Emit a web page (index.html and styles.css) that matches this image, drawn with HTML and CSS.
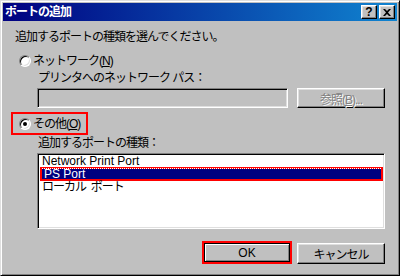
FILE: index.html
```html
<!DOCTYPE html>
<html lang="ja">
<head>
  <meta charset="UTF-8">
  <title>ポートの追加</title>
  <link rel="stylesheet" href="styles.css">
</head>
<body>
<div class="window">
  <div class="title-bar">
    <span class="title-text">ポートの追加</span>
    <div class="title-buttons">
      <span class="title-btn help">?</span>
      <span class="title-btn close">
        <svg width="8" height="7" viewBox="0 0 8 7"><path d="M0 0h2l2 2 2-2h2L5 3.5 8 7H6L4 5 2 7H0l3-3.5z" fill="#000"/></svg>
      </span>
    </div>
  </div>
  <div class="content">
    <div class="prompt ja">追加するポートの種類を選んでください。</div>

    <div class="radio-row network">
      <span class="radio"></span>
      <span class="ja">ネットワーク(<u>N</u>)</span>
    </div>
    <div class="sub-label ja">プリンタへのネットワーク パス：</div>
    <div class="path-row">
      <div class="textbox"></div>
      <button class="btn disabled ja">参照(<u>B</u>)...</button>
    </div>

    <div class="radio-row other">
      <span class="radio checked"></span>
      <span class="ja">その他(<u>O</u>)</span>
    </div>
    <div class="sub-label ja">追加するポートの種類：</div>
    <div class="listbox">
      <div class="list-item first">Network Print Port</div>
      <div class="list-item selected"><span class="focus">PS Port</span></div>
      <div class="list-item ja">ローカル&nbsp; ポート</div>
    </div>

    <div class="actions">
      <div class="default-wrap">
        <button class="btn default">OK</button>
      </div>
      <button class="btn cancel ja">キャンセル</button>
    </div>
  </div>
</div>
</body>
</html>
```

FILE: styles.css
```css
body {
  margin: 0;
  font-family: "Liberation Sans", "Noto Sans CJK JP", sans-serif;
  font-size: 12px;
  color: #000;
}

.ja {
  letter-spacing: -1px;
}

.window {
  width: 400px;
  height: 276px;
  box-sizing: border-box;
  background-color: #c0c0c0;
  border: 1px solid;
  border-color: #dfdfdf #000 #000 #dfdfdf;
  box-shadow: inset 1px 1px #fff, inset -1px -1px #808080;
  padding: 2px;
  overflow: hidden;
}

.title-bar {
  height: 18px;
  display: flex;
  align-items: center;
  justify-content: space-between;
  background: linear-gradient(to right, #000080, #1084d0);
  padding: 0 2px 0 2px;
}

.title-text {
  color: #fff;
  font-weight: bold;
  letter-spacing: -1px;
  line-height: 14px;
}

.title-buttons {
  display: flex;
  gap: 2px;
}

.title-btn {
  width: 14px;
  height: 12px;
  display: flex;
  align-items: center;
  justify-content: center;
  background-color: #c0c0c0;
  border: 1px solid;
  border-color: #fff #000 #000 #fff;
  box-shadow: inset -1px -1px #808080, inset 1px 1px #dfdfdf;
  font-weight: bold;
  font-size: 12px;
  line-height: 12px;
}

.content {
  padding: 0 12px 0 11px;
}

.prompt {
  margin: 10px 0 0 1px;
  line-height: 13px;
}

.radio-row {
  display: flex;
  align-items: center;
  gap: 2px;
  line-height: 12px;
}

.radio-row.network {
  margin-top: 11px;
  padding-left: 5px;
}

.radio-row.other {
  width: 67px;
  height: 19px;
  margin: 4px 0 0 -3px;
  padding-left: 6px;
  border: 2px solid #f00;
}

.radio {
  width: 12px;
  height: 12px;
  box-sizing: border-box;
  border-radius: 50%;
  background-color: #fff;
  border: 1px solid;
  border-color: #808080 #fff #fff #808080;
  box-shadow: inset 1px 1px #000, inset -1px -1px #dfdfdf;
  display: flex;
  align-items: center;
  justify-content: center;
}

.radio.checked::after {
  content: "";
  width: 4px;
  height: 4px;
  border-radius: 50%;
  background-color: #000;
}

.sub-label {
  margin-left: 24px;
  line-height: 13px;
}

.network + .sub-label {
  margin-top: 5px;
}

.other + .sub-label {
  margin-top: 2px;
}

.path-row {
  display: flex;
  gap: 9px;
  margin: 3px 0 0 23px;
  height: 20px;
}

.textbox {
  flex: 1;
  box-sizing: border-box;
  border: 1px solid;
  border-color: #808080 #fff #fff #808080;
  box-shadow: inset 1px 1px #000, inset -1px -1px #dfdfdf;
  background-color: #c0c0c0;
}

.btn {
  font-family: inherit;
  font-size: 12px;
  padding: 0;
  background-color: #c0c0c0;
  border: 1px solid;
  border-color: #fff #000 #000 #fff;
  box-shadow: inset -1px -1px #808080, inset 1px 1px #dfdfdf;
  color: #000;
  width: 88px;
  height: 21px;
}

.btn.disabled {
  height: 20px;
  color: #808080;
  text-shadow: 1px 1px #fff;
}

.listbox {
  margin: 3px 0 0 23px;
  height: 76px;
  box-sizing: border-box;
  background-color: #fff;
  border: 1px solid;
  border-color: #808080 #fff #fff #808080;
  box-shadow: inset 1px 1px #000, inset -1px -1px #dfdfdf;
  padding: 2px 1px 0 2px;
}

.list-item {
  height: 13px;
  line-height: 13px;
  padding-left: 2px;
  white-space: nowrap;
}

.list-item.first {
  height: 11px;
  line-height: 11px;
}

.list-item.selected {
  height: 14px;
  box-sizing: border-box;
  border: 2px solid #f00;
  background-color: #000080;
  color: #fff;
  padding: 0;
}

.focus {
  display: block;
  height: 10px;
  line-height: 10px;
  padding-left: 2px;
  border-top: 1px dotted #fff;
  margin-top: -1px;
}

.actions {
  display: flex;
  justify-content: flex-end;
  gap: 5px;
  margin-top: 12px;
}

.default-wrap {
  border: 2px solid #f00;
  width: 86px;
  height: 19px;
}

.btn.default {
  width: 86px;
  height: 19px;
  border-color: #000;
  box-shadow: inset 1px 1px #fff, inset -1px -1px #808080;
}

.btn.cancel {
  align-self: flex-end;
}
```
